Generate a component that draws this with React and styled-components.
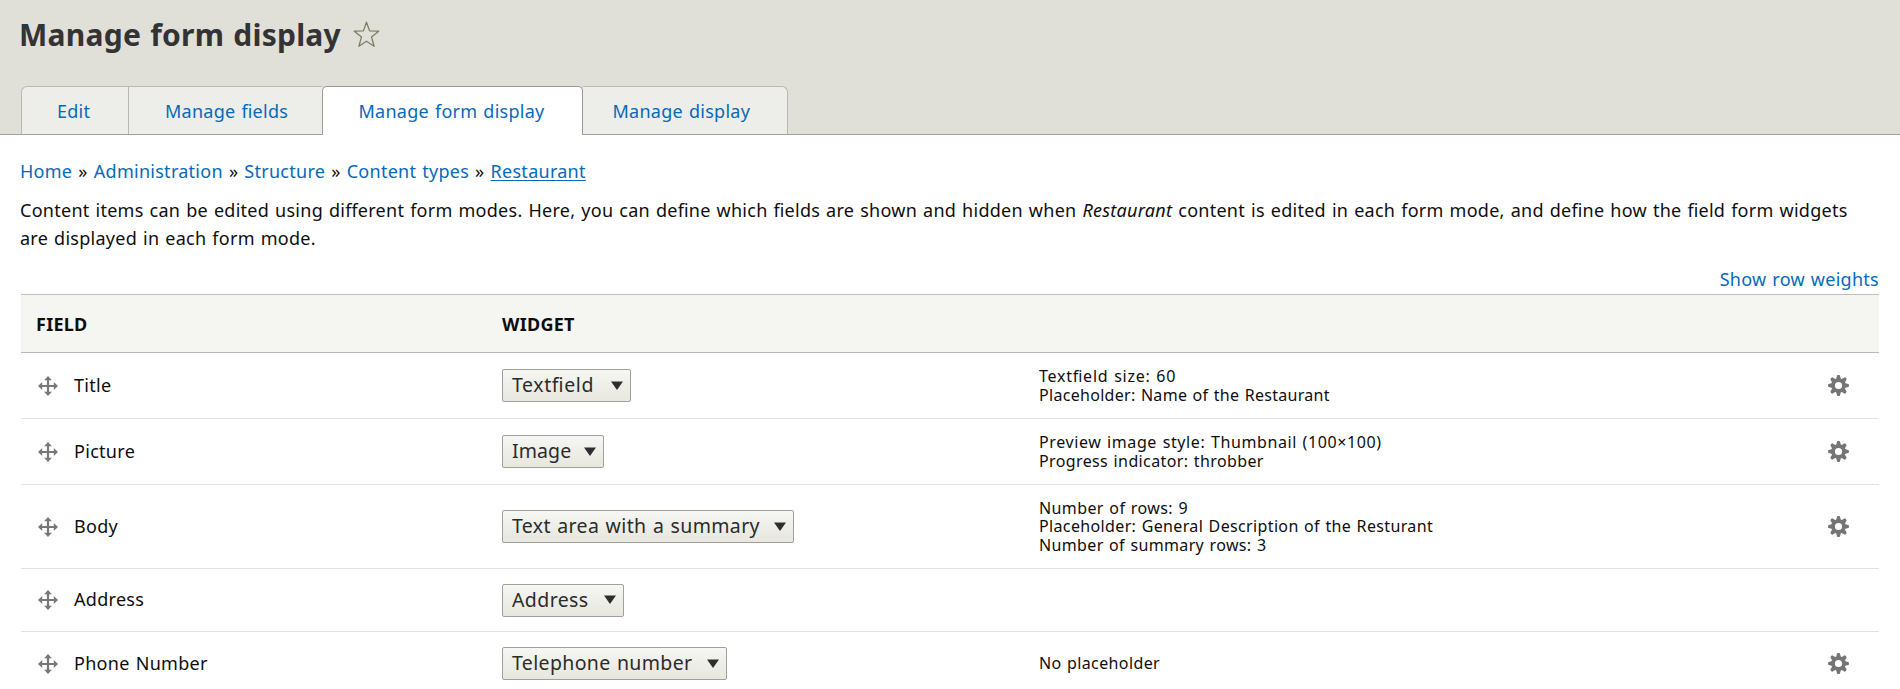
import React from 'react';
import styled, { createGlobalStyle } from 'styled-components';

const GlobalStyle = createGlobalStyle`
  * {
    box-sizing: border-box;
  }
  body {
    margin: 0;
    background: #fff;
    color: #0e0e0e;
    font-family: 'Noto Sans', 'Open Sans', sans-serif;
    font-size: 18px;
    letter-spacing: 0.27px;
    word-spacing: 1px;
    font-feature-settings: 'liga' 1;
    overflow: hidden;
  }
`;

const Page = styled.div`
  height: 689px;
  overflow: hidden;
`;

const Header = styled.header`
  display: flex;
  flex-direction: column;
  justify-content: space-between;
  height: 135px;
  padding-top: 16px;
  background: #e0e0d8;
`;

const TitleBar = styled.div`
  display: flex;
  align-items: center;
  gap: 12px;
  padding-left: 19px;
`;

const PageTitle = styled.h1`
  margin: 0;
  color: #333;
  font-size: 30px;
  font-weight: 700;
  line-height: 37px;
  letter-spacing: 0.25px;
`;

const TabList = styled.nav`
  display: flex;
  height: 49px;
  padding-left: 21px;
  border-bottom: 1px solid #a0a09d;
`;

const Tab = styled.a`
  width: ${(p) => p.$width}px;
  height: ${(p) => (p.$active ? 49 : 48)}px;
  padding-left: ${(p) => p.$indent}px;
  border: 1px solid ${(p) => (p.$active ? '#999' : '#b8b8b5')};
  border-width: ${(p) => (p.$active ? '1px 1px 0' : '1px 0 0 1px')};
  border-radius: ${(p) => p.$radius || '0'};
  background: ${(p) => (p.$active ? '#fff' : '#ededea')};
  color: #0769b9;
  line-height: 49px;
  white-space: nowrap;

  &:last-child {
    border-width: 1px 1px 0 0;
  }
`;

const Content = styled.main`
  padding: 22px 21px 0;
`;

const Breadcrumb = styled.nav`
  display: flex;
  height: 39px;
  margin-left: -1px;
  line-height: 28px;
`;

const Link = styled.a`
  color: #0769b9;
  text-decoration: ${(p) => (p.$underlined ? 'underline' : 'none')};
  text-decoration-thickness: 1px;
  text-underline-offset: 2px;
`;

const Separator = styled.span`
  width: 21.5px;
  text-align: center;
`;

const Description = styled.p`
  margin: 0 0 13px -1px;
  line-height: 28px;
`;

const WeightToggle = styled.div`
  height: 29px;
  line-height: 29px;
  text-align: right;
`;

const Row = styled.div`
  display: grid;
  grid-template-columns: 481px 537px 1fr 51px;
  align-items: center;
  height: ${(p) => p.$height}px;
  border-bottom: 1px solid #e3e3dd;
`;

const HeadRow = styled(Row)`
  border-top: 1px solid #bfbfba;
  border-bottom-color: #b9b9b5;
  background: #f5f5f1;
  font-weight: 700;
`;

const HeadCell = styled.div`
  padding-left: ${(p) => p.$indent}px;
`;

const FieldCell = styled.div`
  display: flex;
  align-items: center;
  gap: 16px;
  padding-left: 17px;
`;

const FieldLabel = styled.span`
  margin-top: -2px;
  letter-spacing: 0.3px;
`;

const Select = styled.button`
  display: flex;
  align-items: center;
  justify-content: space-between;
  width: ${(p) => p.$width}px;
  height: 33px;
  padding: 0 7px 1px 9px;
  border: 1px solid #a0a09d;
  border-radius: 2px;
  background: linear-gradient(#f6f6f3, #e7e7df);
  color: #2b2b2b;
  font: inherit;
  font-size: 19.5px;
  line-height: 30px;
  letter-spacing: ${(p) => p.$track}px;
  word-spacing: 1px;
  white-space: nowrap;
`;

const Summary = styled.div`
  font-size: 16px;
  line-height: 18.3px;
  word-spacing: 0.9px;
  white-space: nowrap;
`;

const SummaryLine = styled.div`
  letter-spacing: ${(p) => p.$track}px;
`;

const StarIcon = () => (
  <svg width="27" height="27" viewBox="0 0 27 27" fill="none" stroke="#7d7d65" strokeWidth="1.3" strokeLinejoin="round">
    <path d="M13.5 1.2 L16.6 9.9 L25.7 10.2 L18.5 15.9 L21.1 25.2 L13.5 20.2 L5.9 25.2 L8.5 15.9 L1.3 10.2 L10.4 9.9 Z" />
  </svg>
);

const MoveIcon = () => (
  <svg width="20" height="20" viewBox="0 0 20 20" fill="#787878">
    <path d="M10 0l3.9 4.2h-2.8v4.7h4.7V6.1L20 10l-4.2 3.9v-2.8h-4.7v4.7h2.8L10 20l-3.9-4.2h2.8v-4.7H4.2v2.8L0 10l4.2-3.9v2.8h4.7V4.2H6.1z" />
  </svg>
);

const TEETH = [0, 45, 90, 135, 180, 225, 270, 315];

const GearIcon = () => (
  <svg width="21" height="21" viewBox="-10.5 -10.5 21 21" fill="#757575">
    {TEETH.map((angle) => (
      <path key={angle} d="M-2.5 -6L-1.5 -9.7Q-1.4 -10.4 -.8 -10.4H.8Q1.4 -10.4 1.5 -9.7L2.5 -6Z" transform={`rotate(${angle})`} />
    ))}
    <circle r="5.45" fill="none" stroke="#757575" strokeWidth="3.7" />
  </svg>
);

const ArrowIcon = () => (
  <svg width="12" height="9" viewBox="0 0 12 9" fill="#2e2e2e">
    <path d="M0 0.5H12L6 9Z" />
  </svg>
);

const TABS = [
  { label: 'Edit', width: 107, indent: 35, radius: '6px 0 0 0' },
  { label: 'Manage fields', width: 194, indent: 36 },
  { label: 'Manage form display', width: 261, indent: 35.5, active: true, radius: '5px 5px 0 0' },
  { label: 'Manage display', width: 205, indent: 29.5, radius: '0 6px 0 0' },
];

const CRUMBS = ['Home', 'Administration', 'Structure', 'Content types', 'Restaurant'];

const ROWS = [
  {
    label: 'Title', height: 66, widget: 'Textfield', width: 129, track: 0.6,
    summary: [['Textfield size: 60', 0.75], ['Placeholder: Name of the Restaurant', 0.3]],
  },
  {
    label: 'Picture', height: 66, widget: 'Image', width: 102, track: 0.1,
    summary: [['Preview image style: Thumbnail (100×100)', 0.6], ['Progress indicator: throbber', 0.38]],
  },
  {
    label: 'Body', height: 84, widget: 'Text area with a summary', width: 292, track: 0.35,
    summary: [
      ['Number of rows: 9', 0.4],
      ['Placeholder: General Description of the Resturant', 0.36],
      ['Number of summary rows: 3', 0.36],
    ],
  },
  { label: 'Address', height: 63, widget: 'Address', width: 122, track: 0.4 },
  {
    label: 'Phone Number', height: 64, widget: 'Telephone number', width: 225, track: 0.35,
    summary: [['No placeholder', 0.38]],
  },
];

export default function App() {
  return (
    <Page>
      <GlobalStyle />
      <Header>
        <TitleBar>
          <PageTitle>Manage form display</PageTitle>
          <StarIcon />
        </TitleBar>
        <TabList>
          {TABS.map((t) => (
            <Tab key={t.label} $width={t.width} $indent={t.indent} $active={t.active} $radius={t.radius}>
              {t.label}
            </Tab>
          ))}
        </TabList>
      </Header>
      <Content>
        <Breadcrumb>
          {CRUMBS.map((c, i) => (
            <React.Fragment key={c}>
              {i > 0 && <Separator>»</Separator>}
              <Link $underlined={i === CRUMBS.length - 1}>{c}</Link>
            </React.Fragment>
          ))}
        </Breadcrumb>
        <Description>
          Content items can be edited using different form modes. Here, you can define which fields are shown and
          hidden when <em>Restaurant</em> content is edited in each form mode, and define how the field form widgets
          are displayed in each form mode.
        </Description>
        <WeightToggle>
          <Link>Show row weights</Link>
        </WeightToggle>
        <HeadRow $height={59}>
          <HeadCell $indent={15}>FIELD</HeadCell>
          <HeadCell $indent={0}>WIDGET</HeadCell>
        </HeadRow>
        {ROWS.map((r) => (
          <Row key={r.label} $height={r.height}>
            <FieldCell>
              <MoveIcon />
              <FieldLabel>{r.label}</FieldLabel>
            </FieldCell>
            <Select $width={r.width} $track={r.track}>
              {r.widget}
              <ArrowIcon />
            </Select>
            <Summary>
              {r.summary?.map(([text, track]) => (
                <SummaryLine key={text} $track={track}>{text}</SummaryLine>
              ))}
            </Summary>
            {r.summary && <GearIcon />}
          </Row>
        ))}
      </Content>
    </Page>
  );
}
